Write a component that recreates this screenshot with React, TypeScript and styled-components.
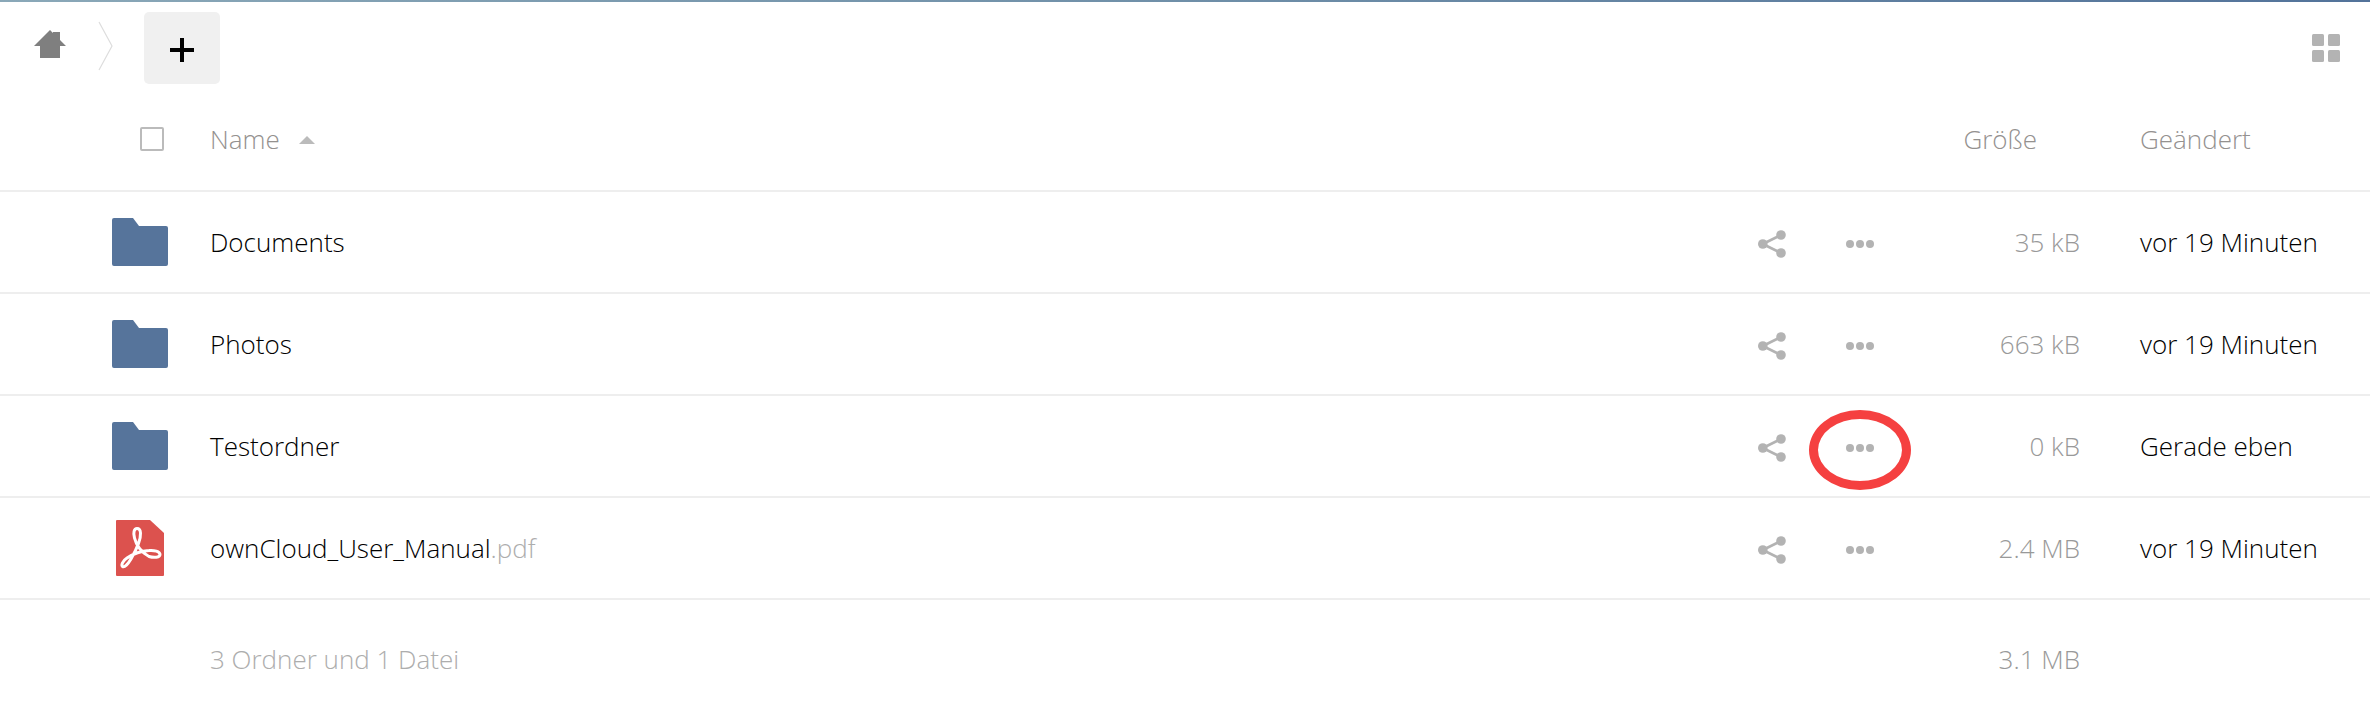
import React from "react";
import styled, { createGlobalStyle } from "styled-components";

const Global = createGlobalStyle`
  html, body { margin: 0; padding: 0; background: #fff; }
  body { font-family: "Open Sans", "Liberation Sans", sans-serif; font-weight: 300; font-size: 26px; color: #000; overflow: hidden; }
`;

const Page = styled.div`
  width: 2370px;
  height: 714px;
  overflow: hidden;
  display: flex;
  flex-direction: column;
`;
const TopLine = styled.div`
  height: 2px;
  flex: none;
  background: linear-gradient(90deg, #8aa8b8 0%, #6f8fa8 50%, #53739a 100%);
`;
const Toolbar = styled.div`
  height: 86px;
  flex: none;
  display: flex;
  align-items: flex-start;
  padding: 10px 30px 0 34px;
  box-sizing: border-box;
`;
const Home = styled.svg`
  width: 32px;
  height: 28px;
  margin-top: 18px;
  flex: none;
`;
const Crumb = styled.svg`
  width: 15px;
  height: 50px;
  margin: 9px 0 0 32px;
  flex: none;
`;
const AddButton = styled.div`
  width: 76px;
  height: 72px;
  margin-left: 31px;
  padding-top: 4px;
  box-sizing: border-box;
  border-radius: 5px;
  background: #f0f0f0;
  display: flex;
  align-items: center;
  justify-content: center;
  flex: none;
`;
const ViewToggle = styled.svg`
  width: 28px;
  height: 28px;
  margin: 22px 0 0 auto;
  flex: none;
`;
const Grid = "210px 1548px 88px 28px 206px 60px 1fr";
const HeadRow = styled.div`
  height: 104px;
  flex: none;
  box-sizing: border-box;
  border-bottom: 2px solid #eee;
  display: grid;
  grid-template-columns: ${Grid};
  align-items: center;
  color: #94918f;
`;
const CheckCell = styled.div`
  display: flex;
  justify-content: flex-end;
  padding-right: 46px;
`;
const Check = styled.div`
  width: 24px;
  height: 24px;
  box-sizing: border-box;
  border: 2px solid #bbb;
  border-radius: 2px;
`;
const HeadName = styled.div`
  display: flex;
  align-items: center;
  gap: 19px;
`;
const SortArrow = styled.svg`
  width: 16px;
  height: 8px;
  margin-top: 2px;
`;
const HeadSize = styled.div`
  grid-column: 5;
  text-align: right;
  padding-right: 43px;
`;
const HeadDate = styled.div`
  grid-column: 7;
`;
const Row = styled.div`
  height: 102px;
  flex: none;
  box-sizing: border-box;
  border-bottom: 2px solid #eee;
  display: grid;
  grid-template-columns: ${Grid};
  align-items: center;
`;
const IconCell = styled.div`
  display: flex;
  padding-left: ${(p: { $left: number }) => p.$left}px;
`;
const Name = styled.div`
  color: #000;
`;
const Ext = styled.span`
  color: #adadad;
`;
const Action = styled.div`
  position: relative;
  display: flex;
  align-items: center;
  height: 28px;
  margin-top: 4px;
`;
const Marker = styled.div`
  position: absolute;
  left: -37px;
  top: -24px;
  width: 102px;
  height: 80px;
  box-sizing: border-box;
  border: 9px solid #f54040;
  border-radius: 50%;
`;
const Size = styled.div`
  grid-column: 5;
  text-align: right;
  color: #999;
`;
const DateCell = styled.div`
  grid-column: 7;
`;
const Footer = styled.div`
  flex: none;
  height: 114px;
  padding-top: 4px;
  box-sizing: border-box;
  display: grid;
  grid-template-columns: ${Grid};
  align-items: center;
  color: #adadad;
`;
const FooterLabel = styled.div`
  grid-column: 2;
`;

const Folder = () => (
  <svg width="56" height="48" viewBox="0 0 56 48">
    <path d="M2 0H21L27 8H54a2 2 0 0 1 2 2V46a2 2 0 0 1-2 2H2a2 2 0 0 1-2-2V2a2 2 0 0 1 2-2Z" fill="#56749b" />
  </svg>
);
const Pdf = () => (
  <svg width="48" height="56" viewBox="0 0 48 56">
    <path d="M1 0H34L48 13V55a1 1 0 0 1-1 1H1a1 1 0 0 1-1-1V1a1 1 0 0 1 1-1Z" fill="#dc524e" />
    <path
      d="M21 8.5C18 8.5 17 13 18.5 18C20 25 26 33 33 36.5C38 38 44 37.5 44 34.5C44 31.5 38 30 33 30.5C25 31 17 34 11 38C6.5 41 5 45 6.5 46.5C8.5 48 12 44 15 39C19 32 25 20 24.5 13C24.3 10 23 8.5 21 8.5Z"
      fill="none"
      stroke="#fff"
      strokeWidth="3"
    />
  </svg>
);
const Share = () => (
  <svg width="28" height="28" viewBox="0 0 28 28" fill="#b3b3b3">
    <circle cx="23" cy="5" r="4.8" />
    <circle cx="4.8" cy="14" r="4.8" />
    <circle cx="23" cy="23" r="4.8" />
    <path d="M23 5L4.8 14L23 23" fill="none" stroke="#b3b3b3" strokeWidth="2.8" />
  </svg>
);
const Dots = () => (
  <svg width="28" height="8" viewBox="0 0 28 8" fill="#b3b3b3">
    <circle cx="4" cy="4" r="4" />
    <circle cx="14" cy="4" r="4" />
    <circle cx="24" cy="4" r="4" />
  </svg>
);

const files = [
  { name: "Documents", size: "35 kB", date: "vor 19 Minuten" },
  { name: "Photos", size: "663 kB", date: "vor 19 Minuten" },
  { name: "Testordner", size: "0 kB", date: "Gerade eben", marked: true },
  { name: "ownCloud_User_Manual", ext: ".pdf", size: "2.4 MB", date: "vor 19 Minuten" },
];

export default function App() {
  return (
    <Page>
      <Global />
      <TopLine />
      <Toolbar>
        <Home viewBox="0 0 32 28">
          <path d="M16 0L19 3V2H26V10L32 16H26V28H6V16H0Z" fill="#7f7f7f" />
        </Home>
        <Crumb viewBox="0 0 15 50">
          <path d="M1 1L14 25L1 49" fill="none" stroke="#ddd" strokeWidth="1.2" />
        </Crumb>
        <AddButton>
          <svg width="24" height="24" viewBox="0 0 24 24">
            <path d="M12 0V24M0 12H24" stroke="#000" strokeWidth="4" />
          </svg>
        </AddButton>
        <ViewToggle viewBox="0 0 28 28" fill="#b3b3b3">
          <rect width="12" height="12" rx="1.5" />
          <rect x="16" width="12" height="12" rx="1.5" />
          <rect y="16" width="12" height="12" rx="1.5" />
          <rect x="16" y="16" width="12" height="12" rx="1.5" />
        </ViewToggle>
      </Toolbar>
      <HeadRow>
        <CheckCell>
          <Check />
        </CheckCell>
        <HeadName>
          Name
          <SortArrow viewBox="0 0 16 8">
            <path d="M8 0L16 8H0Z" fill="#bbb" />
          </SortArrow>
        </HeadName>
        <HeadSize>Größe</HeadSize>
        <HeadDate>Geändert</HeadDate>
      </HeadRow>
      {files.map((f) => (
        <Row key={f.name}>
          <IconCell $left={f.ext ? 116 : 112}>{f.ext ? <Pdf /> : <Folder />}</IconCell>
          <Name>
            {f.name}
            {f.ext && <Ext>{f.ext}</Ext>}
          </Name>
          <Action>
            <Share />
          </Action>
          <Action>
            <Dots />
            {f.marked && <Marker />}
          </Action>
          <Size>{f.size}</Size>
          <DateCell>{f.date}</DateCell>
        </Row>
      ))}
      <Footer>
        <FooterLabel>3 Ordner und 1 Datei</FooterLabel>
        <Size>3.1 MB</Size>
      </Footer>
    </Page>
  );
}
